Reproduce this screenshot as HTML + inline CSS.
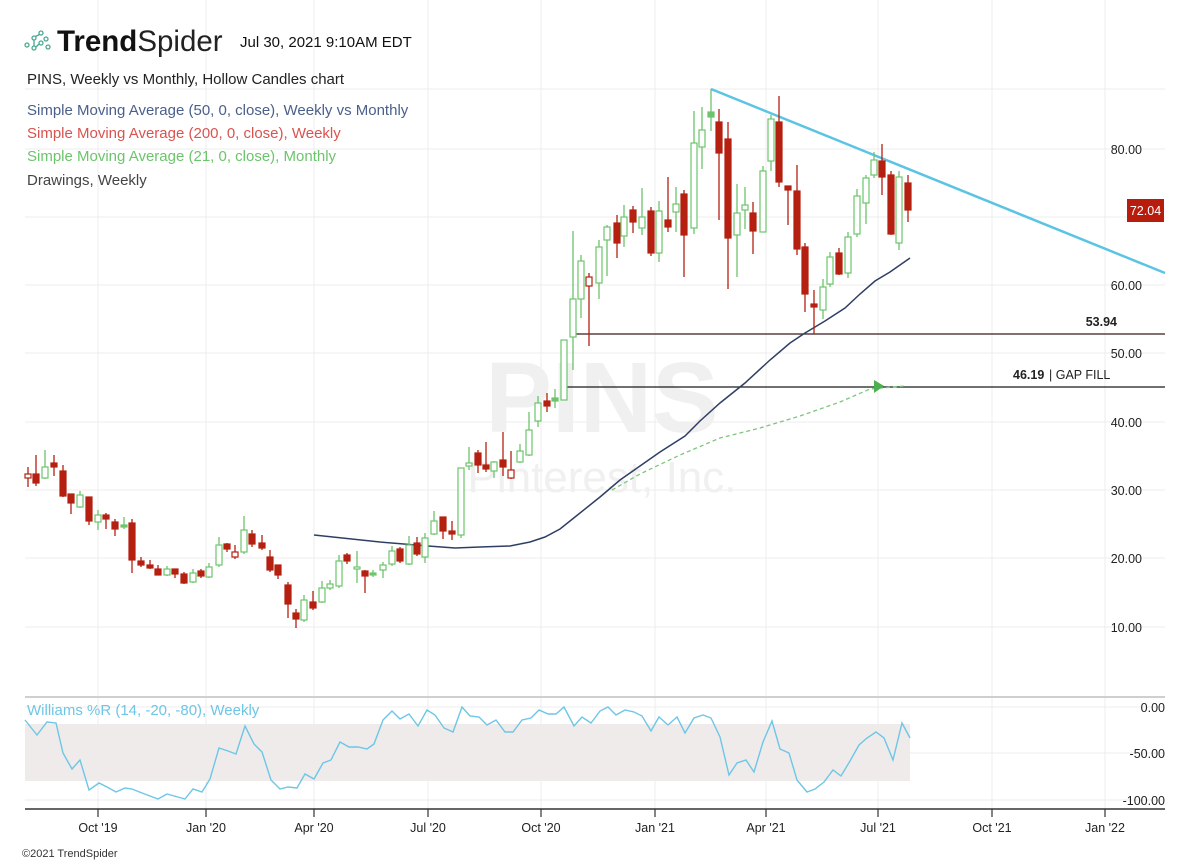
<!DOCTYPE html>
<html><head><meta charset="utf-8"><style>
html,body{margin:0;padding:0;background:#fff;width:1200px;height:863px;overflow:hidden;font-family:"Liberation Sans",Arial,sans-serif}
svg{position:absolute;left:0;top:0}
</style></head><body>
<svg id="s" width="1200" height="863" viewBox="0 0 1200 863" xmlns="http://www.w3.org/2000/svg">
<g stroke="#ececec" stroke-width="1">
<line x1="98" y1="0" x2="98" y2="810"/><line x1="206" y1="0" x2="206" y2="810"/><line x1="314" y1="0" x2="314" y2="810"/><line x1="428" y1="0" x2="428" y2="810"/><line x1="541" y1="0" x2="541" y2="810"/><line x1="655" y1="0" x2="655" y2="810"/><line x1="766" y1="0" x2="766" y2="810"/><line x1="878" y1="0" x2="878" y2="810"/><line x1="992" y1="0" x2="992" y2="810"/><line x1="1105" y1="0" x2="1105" y2="810"/>
<line x1="25" y1="89" x2="1165" y2="89"/><line x1="25" y1="149" x2="1165" y2="149"/><line x1="25" y1="217" x2="1165" y2="217"/><line x1="25" y1="285" x2="1165" y2="285"/><line x1="25" y1="353" x2="1165" y2="353"/><line x1="25" y1="422" x2="1165" y2="422"/><line x1="25" y1="490" x2="1165" y2="490"/><line x1="25" y1="558" x2="1165" y2="558"/><line x1="25" y1="627" x2="1165" y2="627"/>
<line x1="25" y1="707" x2="1165" y2="707"/><line x1="25" y1="753" x2="1165" y2="753"/><line x1="25" y1="800" x2="1165" y2="800"/>
</g>
<text x="602" y="432" font-size="100" font-weight="bold" fill="#f0f0f0" text-anchor="middle">PINS</text>
<text x="602" y="492" font-size="44" fill="#f0f0f0" text-anchor="middle">Pinterest, Inc.</text>
<rect x="25" y="724" width="885" height="57" fill="#efebeb"/>
<line x1="25" y1="697" x2="1165" y2="697" stroke="#cfcfcf" stroke-width="2"/>
<line x1="25" y1="809" x2="1165" y2="809" stroke="#333" stroke-width="1.5"/>
<g stroke="#333" stroke-width="1.2"><line x1="98" y1="809" x2="98" y2="817"/><line x1="206" y1="809" x2="206" y2="817"/><line x1="314" y1="809" x2="314" y2="817"/><line x1="428" y1="809" x2="428" y2="817"/><line x1="541" y1="809" x2="541" y2="817"/><line x1="655" y1="809" x2="655" y2="817"/><line x1="766" y1="809" x2="766" y2="817"/><line x1="878" y1="809" x2="878" y2="817"/><line x1="992" y1="809" x2="992" y2="817"/><line x1="1105" y1="809" x2="1105" y2="817"/></g>
<g font-size="12.5" fill="#222" text-anchor="middle"><text x="98" y="832">Oct '19</text><text x="206" y="832">Jan '20</text><text x="314" y="832">Apr '20</text><text x="428" y="832">Jul '20</text><text x="541" y="832">Oct '20</text><text x="655" y="832">Jan '21</text><text x="766" y="832">Apr '21</text><text x="878" y="832">Jul '21</text><text x="992" y="832">Oct '21</text><text x="1105" y="832">Jan '22</text></g>
<g font-size="12.5" fill="#222" text-anchor="end"><text x="1142" y="154">80.00</text><text x="1142" y="290">60.00</text><text x="1142" y="358">50.00</text><text x="1142" y="427">40.00</text><text x="1142" y="495">30.00</text><text x="1142" y="563">20.00</text><text x="1142" y="632">10.00</text><text x="1165" y="712">0.00</text><text x="1165" y="758">-50.00</text><text x="1165" y="805">-100.00</text></g>
<rect x="1127" y="199" width="37" height="23" fill="#b71c0c"/><text x="1145.5" y="215" font-size="12.5" fill="#fff" text-anchor="middle">72.04</text>
<line x1="573" y1="334" x2="1165" y2="334" stroke="#3a1a1a" stroke-width="1.3"/>
<line x1="565" y1="387" x2="1165" y2="387" stroke="#1a1a1a" stroke-width="1.3"/>
<text x="1117" y="326" font-size="12.5" font-weight="bold" fill="#222" text-anchor="end">53.94</text>
<text x="1013" y="379" font-size="12.5" font-weight="bold" fill="#222">46.19</text><text x="1049" y="379" font-size="12.5" fill="#222">| GAP FILL</text>
<polyline fill="none" stroke="#7cc67c" stroke-width="1.3" stroke-dasharray="4,3" points="612,490 640,474 680,455 720,438 760,428 800,416 840,402 870,389 905,386"/>
<polygon points="874,380 874,393 884,386" fill="#4caf50"/>
<polyline fill="none" stroke="#2f3f63" stroke-width="1.5" points="314,535 380,542 428,546 455,548 480,547 510,546 530,542 545,537 560,529 575,517 600,497 620,480 640,466 660,452 685,436 700,421 720,403 745,383 770,360 790,343 805,333 825,321 845,308 860,294 875,281 890,272 910,258"/>
<line x1="711" y1="89" x2="1165" y2="273" stroke="#5bc4e3" stroke-width="2.5"/>
<g id="c"></g>
<polyline fill="none" stroke="#6ec6e6" stroke-width="1.4" points="25,720 37,735 47,722 56,723 63,753 72,769 80,760 89,790 99,783 107,787 116,792 125,788 132,789 142,793 158,799 167,794 185,799 193,789 202,792 210,779 219,748 228,751 236,754 245,726 254,744 262,752 271,780 280,789 288,787 297,788 305,774 314,779 323,763 331,760 340,742 349,747 358,747 367,749 374,744 383,720 392,711 400,719 409,714 418,726 427,710 435,715 444,728 453,732 462,707 470,716 479,717 487,725 496,720 505,732 513,732 522,720 531,718 539,710 548,714 556,714 564,707 574,726 582,717 591,723 600,711 608,707 616,715 625,710 634,712 642,716 651,731 659,717 668,725 677,717 685,733 694,718 703,715 711,718 720,737 729,775 737,763 746,760 754,772 763,742 772,721 780,749 789,753 797,780 807,792 815,789 824,782 833,770 841,776 850,761 859,745 867,738 876,732 884,738 893,760 902,723 910,738"/>
<text x="27" y="715" font-size="15" fill="#6ec6e6">Williams %R (14, -20, -80), Weekly</text>
<g font-size="15"><text x="27" y="84" fill="#222">PINS, Weekly vs Monthly, Hollow Candles chart</text>
<text x="27" y="115" fill="#4a5f8a">Simple Moving Average (50, 0, close), Weekly vs Monthly</text>
<text x="27" y="138" fill="#d9534f">Simple Moving Average (200, 0, close), Weekly</text>
<text x="27" y="161" fill="#6cc46c">Simple Moving Average (21, 0, close), Monthly</text>
<text x="27" y="185" fill="#444">Drawings, Weekly</text></g>
<g fill="none" stroke="#4aa890" stroke-width="1.3"><circle cx="27" cy="45" r="2"/><circle cx="34" cy="38" r="2"/><circle cx="34" cy="48" r="2"/><circle cx="41" cy="33" r="2"/><circle cx="41" cy="43" r="2"/><circle cx="46" cy="39" r="2"/><circle cx="48" cy="47" r="2"/><line x1="34" y1="40" x2="34" y2="46"/><line x1="35.5" y1="36.5" x2="39.5" y2="34.5"/><line x1="36" y1="47" x2="39" y2="44"/></g>
<text x="57" y="51" font-size="29.5" font-weight="bold" fill="#111">Trend<tspan font-weight="normal" fill="#222">Spider</tspan></text>
<text x="240" y="47" font-size="15" fill="#111">Jul 30, 2021 9:10AM EDT</text>
<text x="22" y="857" font-size="11" fill="#333">©2021 TrendSpider</text>
</svg>
<script>
var d=[[28,474,478,467,487,'h'],[36,474,483,455,486,'r'],[45,467,478,450,479,'g'],[54,463,467,455,476,'r'],[63,471,496,465,497,'r'],[71,494,503,494,514,'r'],[80,495,507,491,508,'g'],[89,497,521,497,525,'r'],[98,515,522,510,530,'g'],[106,515,519,513,529,'r'],[115,522,529,519,536,'r'],[124,525,527,517,529,'G'],[132,523,560,519,573,'r'],[141,561,565,557,567,'r'],[150,565,568,560,569,'r'],[158,569,575,565,575,'r'],[167,569,575,566,576,'g'],[175,569,574,569,578,'r'],[184,574,583,572,584,'r'],[193,573,582,569,583,'g'],[201,571,576,569,578,'r'],[209,567,577,563,578,'g'],[219,545,565,537,567,'g'],[227,544,549,543,552,'r'],[235,552,557,545,559,'h'],[244,530,552,516,554,'g'],[252,534,544,530,547,'r'],[262,543,548,535,550,'r'],[270,557,570,550,572,'r'],[278,565,575,565,579,'r'],[288,585,604,582,618,'r'],[296,613,619,609,628,'r'],[304,600,620,595,622,'g'],[313,602,608,591,610,'r'],[322,588,602,581,603,'g'],[330,584,588,580,590,'g'],[339,561,586,555,588,'g'],[347,555,561,553,564,'r'],[357,567,569,551,583,'g'],[365,571,576,570,593,'r'],[373,573,575,570,577,'G'],[383,565,570,562,578,'g'],[392,551,564,546,566,'g'],[400,549,561,547,563,'r'],[409,545,564,536,565,'g'],[417,543,554,537,556,'r'],[425,538,557,533,563,'g'],[434,521,534,511,535,'g'],[443,517,531,517,539,'r'],[452,531,534,521,540,'r'],[461,468,535,468,538,'g'],[469,463,466,447,470,'g'],[478,453,465,450,473,'r'],[486,465,469,442,472,'r'],[494,462,471,461,478,'g'],[503,460,467,432,476,'r'],[511,470,478,451,479,'h'],[520,451,462,444,463,'g'],[529,430,455,412,456,'g'],[538,403,421,396,427,'g'],[547,401,406,393,412,'r'],[555,398,401,389,408,'G'],[564,340,400,340,400,'g'],[573,299,337,231,370,'g'],[581,261,299,255,318,'g'],[589,277,286,273,346,'h'],[599,247,283,240,299,'g'],[607,227,240,225,276,'g'],[617,223,243,215,258,'r'],[624,217,236,205,247,'g'],[633,210,222,206,233,'r'],[642,217,228,188,235,'g'],[651,211,253,207,256,'r'],[659,211,253,201,262,'g'],[668,220,227,177,232,'r'],[676,204,212,187,232,'g'],[684,194,235,190,277,'r'],[694,143,228,111,234,'g'],[702,130,147,107,169,'g'],[711,112,117,89,131,'G'],[719,122,153,109,220,'r'],[728,139,238,122,289,'r'],[737,213,235,184,277,'g'],[745,205,210,187,229,'g'],[753,213,231,202,254,'r'],[763,171,232,166,232,'g'],[771,119,161,115,171,'g'],[779,122,182,96,187,'r'],[788,186,190,186,225,'r'],[797,191,249,165,255,'r'],[805,247,294,243,312,'r'],[814,304,307,290,334,'r'],[823,287,310,279,319,'g'],[830,257,284,252,287,'g'],[839,253,274,248,275,'r'],[848,237,273,232,278,'g'],[857,196,234,189,237,'g'],[866,178,203,175,224,'g'],[874,160,175,152,178,'g'],[882,161,177,144,195,'r'],[891,175,234,171,235,'r'],[899,177,243,171,250,'g'],[908,183,210,175,222,'r']];
var R='#b52010',G='#6cc46c',h='';
d.forEach(function(c){var col=(c[5]=='g'||c[5]=='G')?G:R;var fill=(c[5]=='r'||c[5]=='G');
h+='<line x1="'+c[0]+'" y1="'+c[3]+'" x2="'+c[0]+'" y2="'+c[4]+'" stroke="'+col+'" stroke-width="1.3"/>';
h+='<rect x="'+(c[0]-3)+'" y="'+c[1]+'" width="6" height="'+Math.max(2,c[2]-c[1])+'" fill="'+(fill?col:'#fff')+'" stroke="'+col+'" stroke-width="1.2"/>';});
document.getElementById('c').innerHTML=h;
</script>
</body></html>
